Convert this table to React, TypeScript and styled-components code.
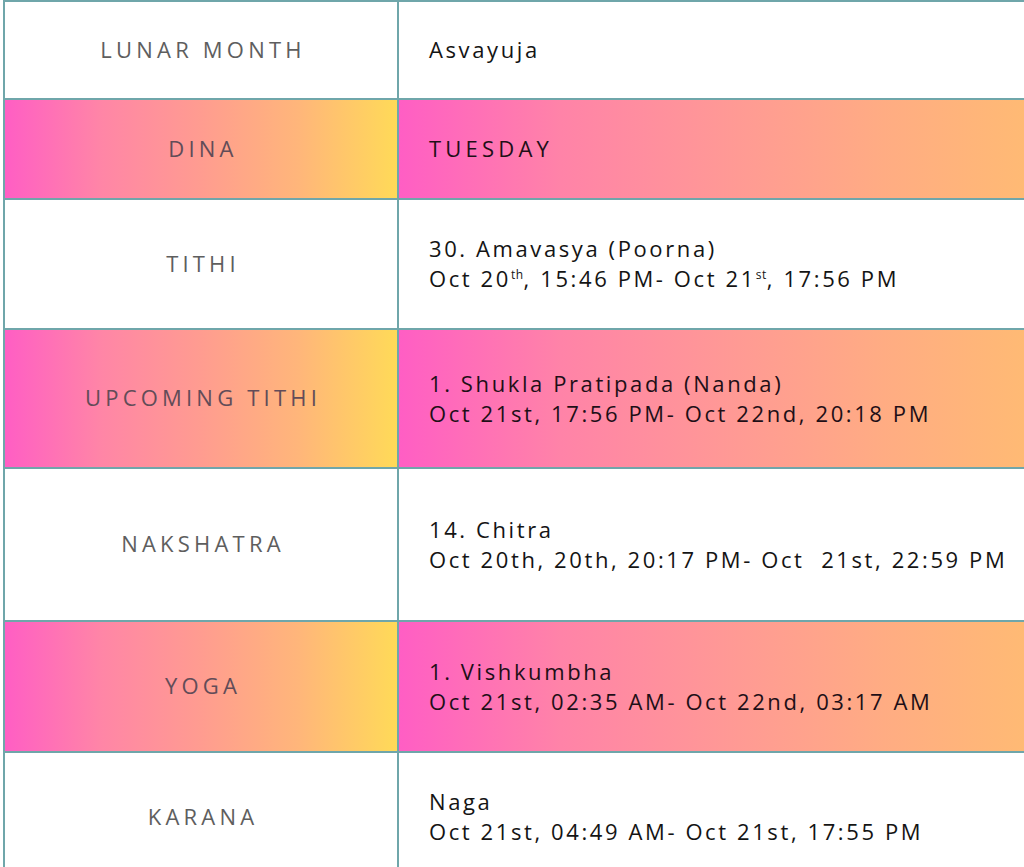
import React from "react";
import styled, { createGlobalStyle, css } from "styled-components";

const Global = createGlobalStyle`
  html, body {
    margin: 0;
    padding: 0;
    background: #ffffff;
    overflow: hidden;
  }
  body {
    font-family: "Open Sans", "Noto Sans", sans-serif;
  }
`;

const Table = styled.div`
  margin-left: 3px;
  width: 1040px;
  border-top: 2px solid #6fa6aa;
  border-left: 2px solid #6fa6aa;
  display: flex;
  flex-direction: column;
`;

const Row = styled.div<{ $h: number }>`
  display: grid;
  grid-template-columns: 394px 1fr;
  height: ${(p) => p.$h}px;
  border-bottom: 2px solid #6fa6aa;
`;

const Label = styled.div<{ $hl: boolean }>`
  display: flex;
  align-items: center;
  justify-content: center;
  padding-left: 4px;
  padding-bottom: 3px;
  border-right: 2px solid #6fa6aa;
  font-size: 22px;
  font-weight: 500;
  letter-spacing: 4.2px;
  color: #5e5e5e;
  ${(p) =>
    p.$hl &&
    css`
      color: #624c58;
      background: linear-gradient(
        90deg,
        #ff5ec4 0%,
        #ff86a6 25%,
        #ff9c90 50%,
        #ffb67a 75%,
        #ffda58 100%
      );
    `}
`;

const Value = styled.div<{ $hl: boolean }>`
  display: flex;
  flex-direction: column;
  justify-content: center;
  padding-left: 30px;
  padding-bottom: 2px;
  font-size: 22px;
  font-weight: 500;
  line-height: 30px;
  letter-spacing: 2.6px;
  color: #141414;
  white-space: pre;
  ${(p) =>
    p.$hl &&
    css`
      color: #1e0f17;
      background: linear-gradient(
        90deg,
        #ff5ec4 0%,
        #ff83a8 25%,
        #ff9896 50%,
        #ffac83 75%,
        #ffbc72 100%
      );
    `}
`;

const Caps = styled.span`
  letter-spacing: 4.2px;
`;

const Sup = styled.sup`
  font-size: 12px;
  line-height: 0;
  letter-spacing: 0.5px;
`;

type RowData = {
  label: string;
  h: number;
  hl: boolean;
  lines: React.ReactNode[];
};

const rows: RowData[] = [
  { label: "LUNAR MONTH", h: 96, hl: false, lines: ["Asvayuja"] },
  { label: "DINA", h: 98, hl: true, lines: [<Caps key="t">TUESDAY</Caps>] },
  {
    label: "TITHI",
    h: 128,
    hl: false,
    lines: [
      "30. Amavasya (Poorna)",
      <span key="l">
        Oct 20<Sup>th</Sup>, 15:46 PM- Oct 21<Sup>st</Sup>, 17:56 PM
      </span>,
    ],
  },
  {
    label: "UPCOMING TITHI",
    h: 137,
    hl: true,
    lines: ["1. Shukla Pratipada (Nanda)", "Oct 21st, 17:56 PM- Oct 22nd, 20:18 PM"],
  },
  {
    label: "NAKSHATRA",
    h: 151,
    hl: false,
    lines: ["14. Chitra", "Oct 20th, 20th, 20:17 PM- Oct  21st, 22:59 PM"],
  },
  {
    label: "YOGA",
    h: 129,
    hl: true,
    lines: ["1. Vishkumbha", "Oct 21st, 02:35 AM- Oct 22nd, 03:17 AM"],
  },
  {
    label: "KARANA",
    h: 128,
    hl: false,
    lines: ["Naga", "Oct 21st, 04:49 AM- Oct 21st, 17:55 PM"],
  },
];

export default function App() {
  return (
    <>
      <Global />
      <Table>
        {rows.map((r) => (
          <Row key={r.label} $h={r.h}>
            <Label $hl={r.hl}>{r.label}</Label>
            <Value $hl={r.hl}>
              {r.lines.map((l, i) => (
                <div key={i}>{l}</div>
              ))}
            </Value>
          </Row>
        ))}
      </Table>
    </>
  );
}
